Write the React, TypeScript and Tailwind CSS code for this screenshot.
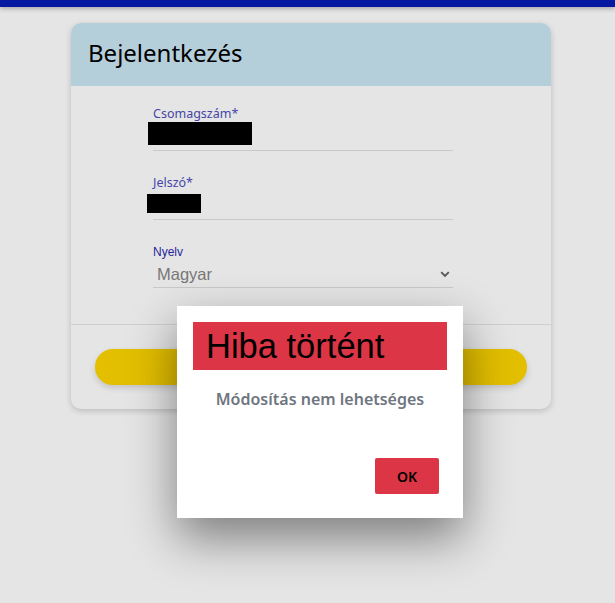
import React from "react";

const sans = "font-['Noto_Sans','Open_Sans',sans-serif]";
const arial = "font-['Liberation_Sans',Arial,sans-serif]";

export default function App() {
  return (
    <div className={`relative min-h-screen bg-[#e5e5e5] ${sans}`}>
      {/* top bar */}
      <div className="h-[7px] bg-[#0518a1] shadow-[0_2px_4px_rgba(0,0,0,0.25)]" />

      {/* login card */}
      <div className="ml-[71px] mt-[16px] w-[480px] rounded-[10px] bg-[#e5e5e5] shadow-[0_2px_6px_rgba(0,0,0,0.18)] overflow-hidden">
        <div className="h-[63px] bg-[#b5cfda] pl-[17px] flex items-center">
          <h1 className="text-[24px] text-black leading-none -mt-[4px]">Bejelentkezés</h1>
        </div>

        <div className="pt-[20px] pl-[82px] pr-[98px]">
          <div className="border-b border-[#c9c9c9] h-[45px]">
            <label className="block text-[12.5px] leading-[16px] text-[#4545a8]">Csomagszám*</label>
            <div className="-ml-[5px] w-[104px] h-[23px] bg-black" />
          </div>

          <div className="mt-[24px] border-b border-[#c9c9c9] h-[45px]">
            <label className="block text-[12.5px] leading-[16px] text-[#4545a8]">Jelszó*</label>
            <div className="mt-[3px] -ml-[6px] w-[54px] h-[19px] bg-black" />
          </div>

          <div className="mt-[24px] border-b border-[#c9c9c9] h-[44px]">
            <label className={`block text-[12px] leading-[16px] text-[#25259c] ${arial}`}>Nyelv</label>
            <div className="flex items-center justify-between h-[26px] pt-[3px] pl-[4px] pr-[3px]">
              <span className={`text-[16.5px] text-[#777777] ${arial}`}>Magyar</span>
              <svg width="10" height="7" viewBox="0 0 10 7">
                <path d="M1.2 1.2 L5 5 L8.8 1.2" fill="none" stroke="#5a5a5a" strokeWidth="1.9" />
              </svg>
            </div>
          </div>
        </div>

        <div className="mt-[36px] border-t border-[#cfcfcf] px-[24px] pt-[24px] pb-[24px]">
          <button className="block w-full h-[36px] rounded-full bg-[#e3bf00] shadow-[0_3px_6px_rgba(0,0,0,0.15)]" />
        </div>
      </div>

      {/* error dialog */}
      <div className="absolute left-[177px] top-[306px] w-[286px] h-[212px] bg-white shadow-[0_20px_45px_rgba(0,0,0,0.45)] p-[16px] flex flex-col">
        <div className="h-[48px] bg-[#dc3545] pl-[13px] flex items-center">
          <span className={`text-[34.5px] leading-none text-black ${arial}`}>Hiba történt</span>
        </div>
        <p className="mt-[17px] text-center text-[16px] font-semibold text-[#6f7680]">
          Módosítás nem lehetséges
        </p>
        <div className="mt-auto flex justify-end pr-[8px] pb-[8px]">
          <button className="w-[64px] h-[36px] rounded-[2px] bg-[#dc3545] text-[14px] font-semibold text-black">
            OK
          </button>
        </div>
      </div>
    </div>
  );
}
